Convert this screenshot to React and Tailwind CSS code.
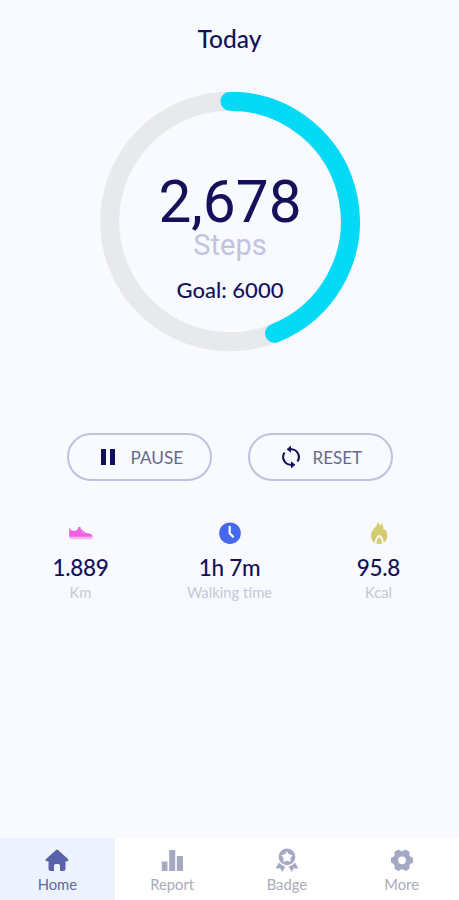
import React from "react";

function Ring() {
  return (
    <svg className="col-start-1 row-start-1 h-[260px] w-[260px]" viewBox="0 0 260 260" fill="none">
      <circle cx="130" cy="129.5" r="120.3" stroke="#e8e9ec" strokeWidth="19" />
      <path d="M130 9.2A120.3 120.3 0 0 1 174.5 241.3" stroke="#04daf5" strokeWidth="19" strokeLinecap="round" />
    </svg>
  );
}

function PauseIcon() {
  return (
    <svg className="h-4 w-[14px]" viewBox="0 0 14 16" fill="#14115a">
      <path d="M0 0h5v16H0zM9 0h5v16H9z" />
    </svg>
  );
}

function ResetIcon() {
  return (
    <svg className="h-6 w-6" viewBox="0 0 24 24" fill="none" stroke="#14115a" strokeWidth="2.1">
      <path d="M11 4.200h1.500a7.800 7.800 0 0 1 5.900 12.300M13 19.800h-1.500A7.800 7.800 0 0 1 5.600 7.500" />
      <path d="M12 .6v7.200L7.600 4.200zM12 16.200v7.200l4.400-3.600z" fill="#14115a" stroke="none" />
    </svg>
  );
}

function ShoeIcon() {
  return (
    <svg className="h-6 w-6" viewBox="0 0 24 24" fill="#ee5fe2">
      <path d="M.2 7c.9 0 1.100 2 2.300 2.400 1.800.4 3.600.4 5.400-.2L8.700 8l.5-2h2.200l.4 2.200 2.600 1.600 2.200 2 4.500.9c1.700.4 2.500 1.600 2.500 3.300H.2z" />
      <path d="M.6 15.800h23c0 1.600-.6 2.500-1.600 2.500H2.200c-1 0-1.600-.9-1.600-2.500z" fill="#f6b5f2" />
      <path d="m12.400 11.500 1.600-1.500M14.800 12.500l1.200-1.200" stroke="#fbd7f8" strokeWidth=".9" />
    </svg>
  );
}

function ClockIcon() {
  return (
    <svg className="h-6 w-6" viewBox="0 0 24 24">
      <circle cx="12" cy="12.2" r="10.8" fill="#4469ed" />
      <path d="M11.700 5.800v6.500l3.300 3.300" fill="none" stroke="#fff" strokeWidth="2.200" strokeLinecap="round" />
    </svg>
  );
}

function FlameIcon() {
  return (
    <svg className="h-6 w-6" viewBox="0 0 24 24">
      <path d="M10.5 1c.4 3-1.4 4.2-3.2 6.3C5.5 9.4 4 11.8 4 15c0 4.4 3.1 8 8 8s8.3-3.4 8.3-8.2c0-3.3-1.1-5.3-2.5-7-.3 1-.6 1.5-1.2 1.9.1-3-.7-6-2.3-7.7-.1 1.4-.5 2.3-1.4 3.2C12.7 3.500 12 2 10.500 1z" fill="#d4cd70" />
      <path d="M12.300 14.500c-2.300 2-3.600 4-3.600 7.800M12.300 14.500c2.300 2 3.600 4 3.600 7.800" fill="none" stroke="#fcfcf6" strokeWidth="1.700" />
    </svg>
  );
}

function HomeIcon() {
  return (
    <svg className="h-6 w-6" viewBox="0 0 24 24" fill="#5962a8">
      <path d="M11 1.900q1-.9 2 0l10 9.100c1 1 .4 2.200-.8 2.200h-1.700v7.500q0 2.300-2.300 2.300H15v-5.300q0-1.700-1.600-1.700h-2.800Q9 16 9 17.700V23H5.800q-2.300 0-2.300-2.300v-7.500H1.800c-1.200 0-1.800-1.200-.8-2.200z" />
    </svg>
  );
}

function ReportIcon() {
  return (
    <svg className="h-6 w-6" viewBox="0 0 24 24" fill="#a5a9c3">
      <path d="M1.800 13.500h5.700v9.500H1.800zM9.200 2h6v21h-6zM16.800 8h6.200v15h-6.200z" />
    </svg>
  );
}

function BadgeIcon() {
  return (
    <svg className="h-6 w-6" viewBox="0 0 24 24" fill="#a3a9c3">
      <circle cx="12" cy="8.900" r="8.300" />
      <path d="m12 3.700 1.900 2.900 3.400.8-2.200 2.700.2 3.400-3.300-1.100-3.300 1.100.2-3.400-2.200-2.700 3.400-.8z" fill="#fff" stroke="#fff" strokeWidth=".6" strokeLinejoin="round" />
      <path d="M4 14.500q2 3.200 6.200 3.900l-2.800 5.500-2.100-3.700-4.800.2zM20 14.500q-2 3.200-6.200 3.900l2.800 5.500 2.100-3.700 4.800.2z" />
    </svg>
  );
}

function GearIcon() {
  return (
    <svg className="h-6 w-6" viewBox="0 0 24 24">
      <g fill="#a3a9c3">
        <circle cx="12" cy="12.300" r="9.200" />
        <rect x="8.700" y="1.200" width="6.600" height="22.200" rx="2" transform="rotate(30 12 12.300)" />
        <rect x="8.700" y="1.200" width="6.600" height="22.200" rx="2" transform="rotate(90 12 12.300)" />
        <rect x="8.700" y="1.200" width="6.600" height="22.200" rx="2" transform="rotate(150 12 12.300)" />
      </g>
      <circle cx="12" cy="12.300" r="3.900" fill="#fff" />
    </svg>
  );
}

function Stat({ icon, value, label }) {
  return (
    <div className="flex flex-1 flex-col items-center">
      {icon}
      <span className="mt-[10px] text-[22.500px] leading-[26px] tracking-[-0.3px] font-medium text-[#14115a]">{value}</span>
      <span className="mt-[2px] text-[14.800px] leading-[18px] text-[#c5c7d9]">{label}</span>
    </div>
  );
}

function Tab({ icon, label, active }) {
  return (
    <div className={`flex flex-1 flex-col items-center pt-[10px] ${active ? "bg-[#edf2ff] text-[#6268a0]" : "bg-white text-[#a9acba]"}`}>
      {icon}
      <span className="mt-[3px] text-[14.800px] leading-[18px]">{label}</span>
    </div>
  );
}

export default function App() {
  return (
    <div className="flex h-[900px] w-[459px] flex-col overflow-hidden bg-[#f8faff] font-['Lato',sans-serif] whitespace-nowrap">
      <h1 className="mt-[24px] text-center text-[24.500px] leading-[30px] font-medium text-[#14115a]">Today</h1>

      <div className="mt-[38px] ml-[100px] grid h-[260px] w-[260px]">
        <Ring />
        <div className="col-start-1 row-start-1 flex flex-col items-center pt-[82px]">
          <span className="font-['Roboto',sans-serif] text-[58.500px] leading-[56px] text-[#14115a]">2,678</span>
          <span className="-mt-[2px] font-['Roboto',sans-serif] text-[29px] leading-[34px] text-[#c1c3df]">Steps</span>
          <span className="mt-[14px] text-[22px] leading-[28px] font-medium text-[#14115a]">Goal: 6000</span>
        </div>
      </div>

      <div className="mt-[81px] flex justify-center gap-[36px]">
        <button className="flex h-[48px] w-[145px] items-center rounded-full border-2 border-[#bfc2de] pl-[32px] text-[#67698c]">
          <PauseIcon />
          <span className="mt-[2px] ml-[16px] text-[17.200px]">PAUSE</span>
        </button>
        <button className="flex h-[48px] w-[145px] items-center rounded-full border-2 border-[#bfc2de] pl-[29px] text-[#67698c]">
          <ResetIcon />
          <span className="mt-[2px] ml-[10px] text-[17px]">RESET</span>
        </button>
      </div>

      <div className="mx-[6px] mt-[40px] flex">
        <Stat icon={<ShoeIcon />} value="1.889" label="Km" />
        <Stat icon={<ClockIcon />} value="1h 7m" label="Walking time" />
        <Stat icon={<FlameIcon />} value="95.8" label="Kcal" />
      </div>

      <nav className="mt-auto flex h-[62px]">
        <Tab icon={<HomeIcon />} label="Home" active />
        <Tab icon={<ReportIcon />} label="Report" />
        <Tab icon={<BadgeIcon />} label="Badge" />
        <Tab icon={<GearIcon />} label="More" />
      </nav>
    </div>
  );
}
